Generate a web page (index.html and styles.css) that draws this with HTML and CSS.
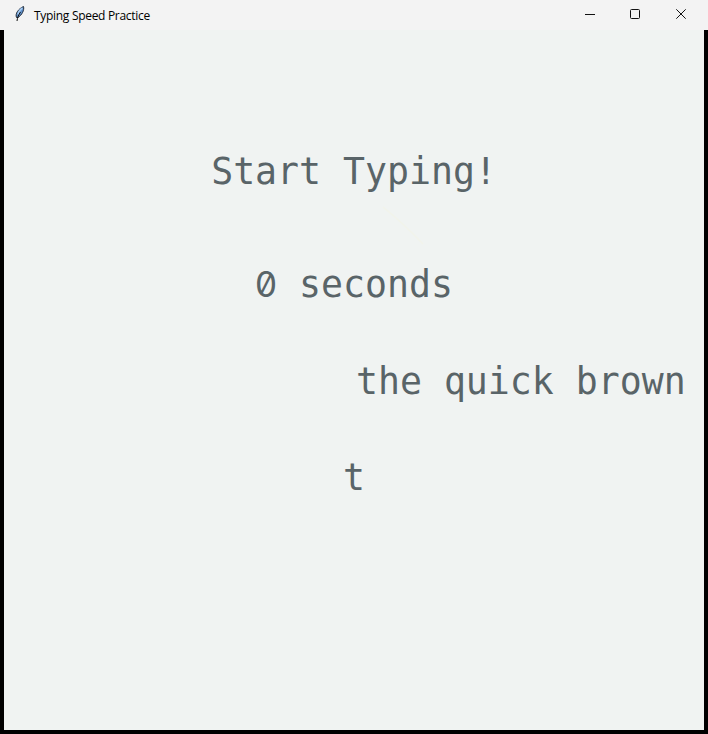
FILE: index.html
```html
<!DOCTYPE html>
<html lang="en">
<head>
<meta charset="utf-8">
<title>Typing Speed Practice</title>
<link rel="stylesheet" href="styles.css">
</head>
<body>
<div class="window">
  <header class="titlebar">
    <svg class="feather" width="12" height="18" viewBox="0 0 12 18">
      <path d="M2.500 12.500C1 9 4 4 9.500 1.500c1 3.500-1.500 8.500-5.500 11z" fill="#5e8fc9" stroke="#202a38"/>
      <path d="M4 9.500C4.500 7 6 4.500 8.500 3" fill="none" stroke="#a3c8f0" stroke-width="1.500"/>
      <path d="M6.500 7C4.500 10 3.500 12 3 16" fill="none" stroke="#111"/>
    </svg>
    <h1 class="title">Typing Speed Practice</h1>
    <div class="controls">
      <svg width="46" height="30" viewBox="0 0 46 30"><path d="M15 14.500h10"/></svg>
      <svg width="45" height="30" viewBox="0 0 45 30"><rect x="14.500" y="9.500" width="9" height="9" rx="1"/></svg>
      <svg width="46" height="30" viewBox="0 0 46 30"><path d="M15.300 9.300l9.400 9.400M24.700 9.300l-9.400 9.400"/></svg>
    </div>
  </header>
  <main class="practice">
    <p class="line heading">Start Typing!</p>
    <svg class="streak" width="44" height="42" viewBox="0 0 44 42"><path d="M2 2Q22 18 42 39"/></svg>
    <p class="line timer"><span class="zero">0</span> seconds</p>
    <p class="line prompt">the quick brown</p>
    <p class="line typed">t</p>
  </main>
</div>
</body>
</html>
```
FILE: styles.css
```css
* { box-sizing: border-box; }
body { margin: 0; background: #000; overflow: hidden; }
.window { width: 708px; height: 734px; display: flex; flex-direction: column; }
.titlebar { flex: none; height: 30px; display: flex; align-items: center; padding-left: 14px; background: #f3f3f3; }
.feather { flex: none; margin-top: -2px; }
.title { margin: 1px 0 0 8px; font: 400 12px/30px "Open Sans", "Noto Sans", sans-serif; letter-spacing: -0.3px; color: #000; white-space: nowrap; }
.controls { display: flex; margin-left: auto; margin-right: 1px; }
.controls svg { fill: none; stroke: #111; stroke-width: 1; }
.practice { flex: 1; margin: 0 4px 4px; padding-top: 118px; background: #f0f3f2; position: relative; overflow: hidden; }
.line { margin: 0; height: 48px; font: 400 36.500px/48px "DejaVu Sans Mono", "Liberation Mono", monospace; color: #596468; text-align: center; white-space: pre; }
.timer { margin-top: 65px; }
.zero { display: inline-block; width: 22px; font-family: Inter, sans-serif; font-size: 35px; line-height: 1; font-feature-settings: "zero"; }
.prompt { margin-top: 49px; padding-left: 352px; text-align: left; }
.typed { margin-top: 48px; }
.streak { position: absolute; left: 377px; top: 175px; fill: none; stroke: #f2f3eb; stroke-width: 1.500; }
```
